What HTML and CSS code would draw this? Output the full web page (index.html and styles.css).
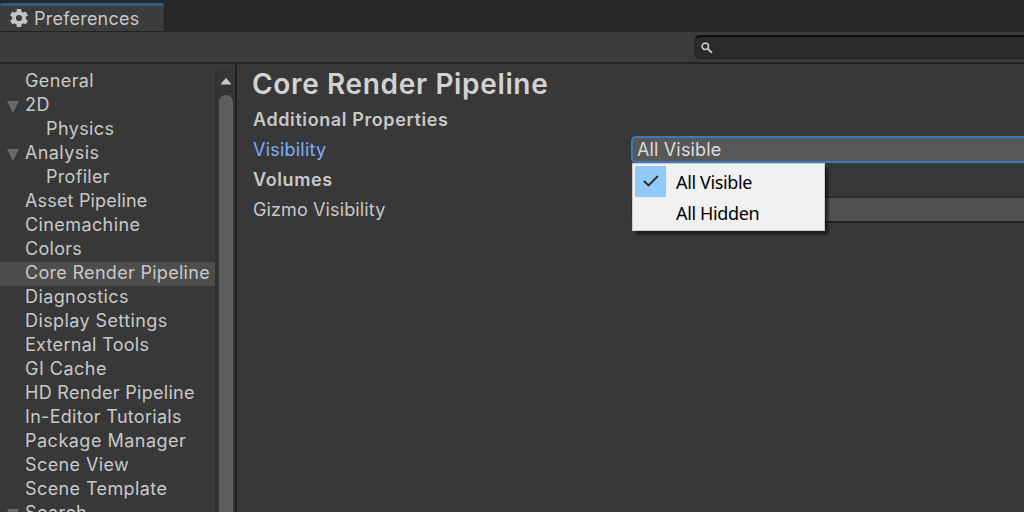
FILE: index.html
```html
<!DOCTYPE html>
<html lang="en">
<head>
<meta charset="utf-8">
<title>Preferences</title>
<link rel="stylesheet" href="styles.css">
</head>
<body>
<div class="window">
  <header class="tabbar">
    <div class="tab">
      <svg class="gear" width="18" height="18" viewBox="-9 -9 18 18">
        <g fill="#c4c4c4">
          <rect x="-2.3" y="-9" width="4.6" height="5.5" rx=".5"/>
          <rect x="-2.3" y="-9" width="4.6" height="5.5" rx=".5" transform="rotate(60)"/>
          <rect x="-2.3" y="-9" width="4.6" height="5.5" rx=".5" transform="rotate(120)"/>
          <rect x="-2.3" y="-9" width="4.6" height="5.5" rx=".5" transform="rotate(180)"/>
          <rect x="-2.3" y="-9" width="4.6" height="5.5" rx=".5" transform="rotate(240)"/>
          <rect x="-2.3" y="-9" width="4.6" height="5.5" rx=".5" transform="rotate(300)"/>
        </g>
        <circle r="5" fill="none" stroke="#c4c4c4" stroke-width="3.8"/>
      </svg>
      <span>Preferences</span>
    </div>
  </header>
  <div class="toolbar">
    <div class="search">
      <svg width="12" height="12" viewBox="0 0 12 12" fill="none" stroke="#c4c4c4"><circle cx="4.3" cy="4.3" r="3.2" stroke-width="1.6"/><path d="M6.7 6.7L11 10.8" stroke-width="1.9"/></svg>
    </div>
  </div>
  <div class="body">
    <nav class="sidebar">
      <ul class="tree">
        <li>General</li>
        <li class="group">2D</li>
        <li class="child">Physics</li>
        <li class="group">Analysis</li>
        <li class="child tight">Profiler</li>
        <li class="tighter">Asset Pipeline</li>
        <li>Cinemachine</li>
        <li class="tight">Colors</li>
        <li class="selected tight">Core Render Pipeline</li>
        <li>Diagnostics</li>
        <li>Display Settings</li>
        <li class="tight">External Tools</li>
        <li class="loose">GI Cache</li>
        <li class="tight">HD Render Pipeline</li>
        <li class="tight">In-Editor Tutorials</li>
        <li class="loose">Package Manager</li>
        <li>Scene View</li>
        <li>Scene Template</li>
        <li class="group">Search</li>
      </ul>
      <div class="scrollbar">
        <svg class="arrow" width="10" height="7" viewBox="0 0 10 7"><path d="M5 0L10 5.5V6.5H0V5.5Z" fill="#c8c8c8"/></svg>
        <div class="thumb"></div>
      </div>
    </nav>
    <main class="content">
      <h1>Core Render Pipeline</h1>
      <h2>Additional Properties</h2>
      <div class="row"><label class="active">Visibility</label>
        <div class="dropdown focused">All Visible
          <div class="menu">
            <div class="option"><span class="check"><svg width="16" height="12" viewBox="0 0 16 12"><path d="M1 6L5.5 10.5L15 1" fill="none" stroke="#2b2b2b" stroke-width="1.9"/></svg></span>All Visible</div>
            <div class="option"><span class="blank"></span>All Hidden</div>
          </div>
        </div>
      </div>
      <h2>Volumes</h2>
      <div class="row"><label>Gizmo Visibility</label><div class="dropdown"></div></div>
    </main>
  </div>
</div>
</body>
</html>
```
FILE: styles.css
```css
* { box-sizing: border-box; }
body {
  margin: 0;
  background: #383838;
  color: #c8c8c8;
  font: 18px/24px Inter, "Liberation Sans", sans-serif;
  letter-spacing: 0.4px;
  white-space: nowrap;
}
.window { width: 1024px; height: 512px; display: flex; flex-direction: column; overflow: hidden; }
.tabbar { height: 32px; flex: none; background: #282828; padding-top: 3px; border-bottom: 1px solid #232323; }
.tab {
  width: 164px; height: 28px; padding: 0 0 0 10px;
  display: flex; align-items: center; gap: 6px;
  background: #3c3c3c; border-top: 3px solid #2c5d87; border-radius: 2px 2px 0 0;
  box-shadow: 1px 0 #222;
}
.tab span { letter-spacing: 0.22px; }
.gear { display: block; margin-top: -1px; }
.toolbar {
  height: 32px; flex: none; background: #3c3c3c; border-bottom: 2px solid #232323;
  display: flex; justify-content: flex-end; padding-top: 3px;
}
.search {
  width: 330px; height: 24px; padding: 5px 0 0 6px;
  background: #2a2a2a; border: 1px solid #212121; border-top: 2px solid #0d0d0d; border-right: 0;
  border-radius: 6px 0 0 6px;
}
.search svg { display: block; }
.body { flex: 1; min-height: 0; display: flex; }
.sidebar { width: 237px; flex: none; display: flex; border-right: 2px solid #1f1f1f; padding-top: 6px; }
.tree { list-style: none; margin: 0; padding: 0; width: 215px; }
.tree li { height: 24px; line-height: 22px; padding-left: 25px; display: flex; }
.tree .child { padding-left: 46px; }
.tree .selected { background: #4d4d4d; }
.tree .group { padding-left: 7px; }
.tree .loose { letter-spacing: 0.5px; }
.tree .tight { letter-spacing: 0.3px; }
.tree .tighter { letter-spacing: 0.17px; }
.group::before {
  content: ""; width: 12px; height: 12px; margin: 7px 6px 0 0;
  background: #6a6a6a; clip-path: polygon(0 0, 100% 0, 50% 100%);
}
.scrollbar {
  width: 20px; background: #353535; border-left: 2px solid #303030;
  display: flex; flex-direction: column; align-items: center; padding-top: 8px;
}
.arrow { flex: none; }
.thumb { width: 14px; height: 440px; flex: none; margin-top: 10px; background: #5f5f5f; border-radius: 7px; }
.content { flex: 1; padding: 4px 0 0 16px; }
h1 { margin: 0 0 0 -1px; font-size: 28px; line-height: 32px; font-weight: 600; color: #d2d2d2; letter-spacing: 0.65px; height: 36px; }
h2 { margin: 0; font-size: 18px; line-height: 32px; height: 30px; font-weight: 600; letter-spacing: 0.6px; }
.row { display: flex; align-items: center; height: 30px; }
.row label { width: 378px; padding-top: 2px; letter-spacing: 0.12px; }
.row .active { color: #7baefa; letter-spacing: 0.22px; }
.dropdown {
  position: relative; flex: 1; height: 27px; padding-left: 4px; line-height: 23px;
  background: #515151; border: 2px solid #303030; border-bottom-color: #242424; border-right: 0;
  border-radius: 5px 0 0 5px; color: #dcdcdc; letter-spacing: 0.15px;
}
.focused { background: #585858; border-color: #3a79bb; }
.menu {
  position: absolute; left: -1px; top: 25px; z-index: 2; width: 193px; height: 68px;
  padding: 2px; background: #f1f1f1; border: 1px solid #ccc; color: #000;
  box-shadow: 4px 4px 3px -1px rgba(0,0,0,.6);
  font: 18px/31px "Noto Sans", sans-serif; letter-spacing: -0.36px;
}
.option { display: flex; height: 31px; line-height: 33px; }
.check, .blank { width: 31px; height: 31px; margin-right: 10px; }
.check { background: #91c9f7; display: flex; align-items: center; justify-content: center; }
```
